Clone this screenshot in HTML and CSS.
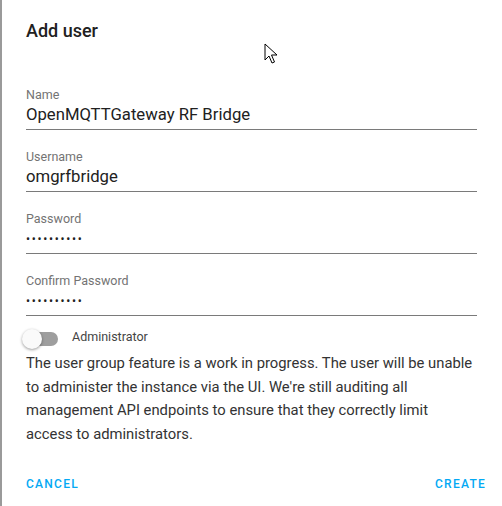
FILE: index.html
```html
<!DOCTYPE html>
<html>
<head>
<meta charset="utf-8">
<link rel="stylesheet" href="styles.css">
</head>
<body>
<div class="dialog">
  <h2 class="title">Add user</h2>
  <div class="fields">
    <div class="field">
      <div class="label">Name</div>
      <div class="value">OpenMQTTGateway RF Bridge</div>
    </div>
    <div class="field">
      <div class="label">Username</div>
      <div class="value">omgrfbridge</div>
    </div>
    <div class="field">
      <div class="label">Password</div>
      <div class="value dots">••••••••••</div>
    </div>
    <div class="field">
      <div class="label">Confirm Password</div>
      <div class="value dots">••••••••••</div>
    </div>
  </div>
  <div class="switch-row">
    <span class="switch"><span class="track"></span><span class="thumb"></span></span>
    <span class="switch-label">Administrator</span>
  </div>
  <p class="note">The user group feature is a work in progress. The user will be unable to administer the instance via the UI. We're still auditing all management API endpoints to ensure that they correctly limit access to administrators.</p>
  <div class="actions">
    <span class="btn">Cancel</span>
    <span class="btn">Create</span>
  </div>
  <svg class="cursor" width="14" height="22" viewBox="0 0 14 22"><path d="M1 1 L1 17 L5 13 L8 20 L10.5 19 L7.5 12 L13 12 Z" fill="#fff" stroke="#000" stroke-width="1"/></svg>
</div>
</body>
</html>
```
FILE: styles.css
```css
html, body { margin: 0; padding: 0; background: #fff; }
body { font-family: Roboto, "Noto Sans", sans-serif; color: rgba(0,0,0,0.87); }
.dialog {
  position: relative;
  box-sizing: border-box;
  width: 502px;
  height: 506px;
  border-left: 2px solid #9a9a9a;
  padding: 0 25px 0 24px;
}
.title {
  margin: 0;
  padding-top: 17px;
  font-size: 18px;
  font-weight: 500;
  line-height: 28px;
  color: #212121;
}
.fields { margin-top: 42px; }
.field {
  border-bottom: 1px solid #7a7a7a;
  padding-bottom: 2px;
  margin-bottom: 19px;
}
.label {
  font-size: 12.5px;
  line-height: 16px;
  color: #737373;
}
.value {
  font-size: 16.7px;
  line-height: 24px;
  color: #212121;
}
.dots { font-size: 12px; letter-spacing: 1.7px; }
.switch-row {
  display: flex;
  align-items: center;
  height: 20px;
  margin-top: -6px;
}
.switch { position: relative; width: 36px; height: 20px; margin-left: -4px; flex: none; }
.track {
  position: absolute; left: 2px; top: 3px; width: 34px; height: 14px;
  border-radius: 7px; background: #9e9e9e;
}
.thumb {
  position: absolute; left: 0; top: 0; width: 20px; height: 20px; border-radius: 50%;
  background: #fafafa; box-shadow: 0 1px 3px rgba(0,0,0,0.4);
}
.switch-label { margin-left: 14px; font-size: 12.5px; color: #444; margin-top: -6px; }
.note {
  margin: 3px 0 0;
  font-size: 14.8px;
  line-height: 23.7px;
  color: #333;
}
.actions {
  position: absolute; left: 24px; right: 16px; bottom: 15px;
  display: flex; justify-content: space-between;
}
.btn {
  font-size: 12px; font-weight: 500; letter-spacing: 1.25px; text-transform: uppercase;
  color: #03a9f4;
}
.cursor { position: absolute; left: 262px; top: 43px; }
```
